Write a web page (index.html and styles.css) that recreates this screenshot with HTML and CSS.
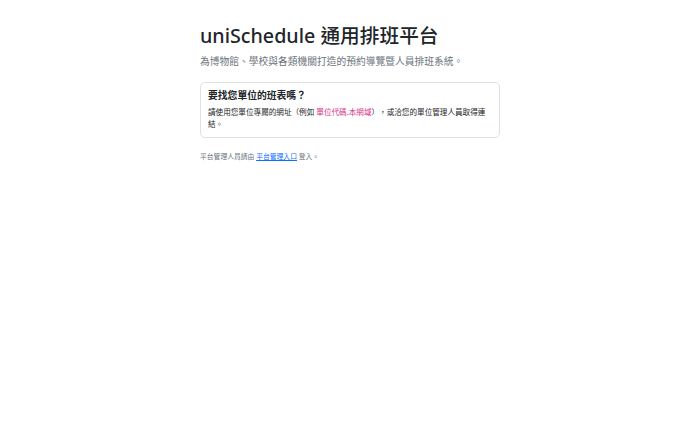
FILE: index.html
```html
<!DOCTYPE html>
<html lang="zh-Hant">

<head>
  <meta charset="UTF-8" />
  <title>uniSchedule 通用排班平台</title>
  <link rel="stylesheet" href="styles.css">
</head>

<body>
  <main class="page">
    <h1 class="title">uniSchedule 通用排班平台</h1>
    <p class="lead">為博物館、學校與各類機關打造的預約導覽暨人員排班系統。</p>

    <div class="card">
      <h2 class="card-title">要找您單位的班表嗎？</h2>
      <p class="card-text">請使用您單位專屬的網址（例如 <code>單位代碼.本網域</code>），或洽您的單位管理人員取得連結。</p>
    </div>

    <p class="admin-note">平台管理人員請由 <a href="#">平台管理入口</a> 登入。</p>
  </main>
</body>

</html>
```

FILE: styles.css
```css
body {
  margin: 0;
  font-family: "Noto Sans", "Noto Sans CJK TC", sans-serif;
  color: #212529;
  background: #fff;
  text-spacing-trim: space-all;
}

.page {
  width: 300px;
  margin: 0 auto;
  padding-top: 24px;
}

.title {
  font-size: 19.7px;
  font-weight: 500;
  line-height: 24px;
  margin: 0 0 7px;
}

.lead {
  font-size: 9.75px;
  line-height: 14px;
  color: #6c757d;
  margin: 0 0 13px;
}

.card {
  border: 1px solid #dee2e6;
  border-radius: 5px;
  padding: 7px;
}

.card-title {
  font-size: 9.8px;
  font-weight: 600;
  line-height: 12px;
  margin: 0 0 4px;
}

.card-text {
  font-size: 7.6px;
  line-height: 12px;
  margin: 0;
}

code {
  font-family: inherit;
  font-size: 1em;
  line-height: 1;
  color: #d63384;
}

.admin-note {
  font-size: 6.8px;
  line-height: 10px;
  color: #6c757d;
  margin: 14px 0 0;
}

.admin-note a {
  color: #0d6efd;
}
```
